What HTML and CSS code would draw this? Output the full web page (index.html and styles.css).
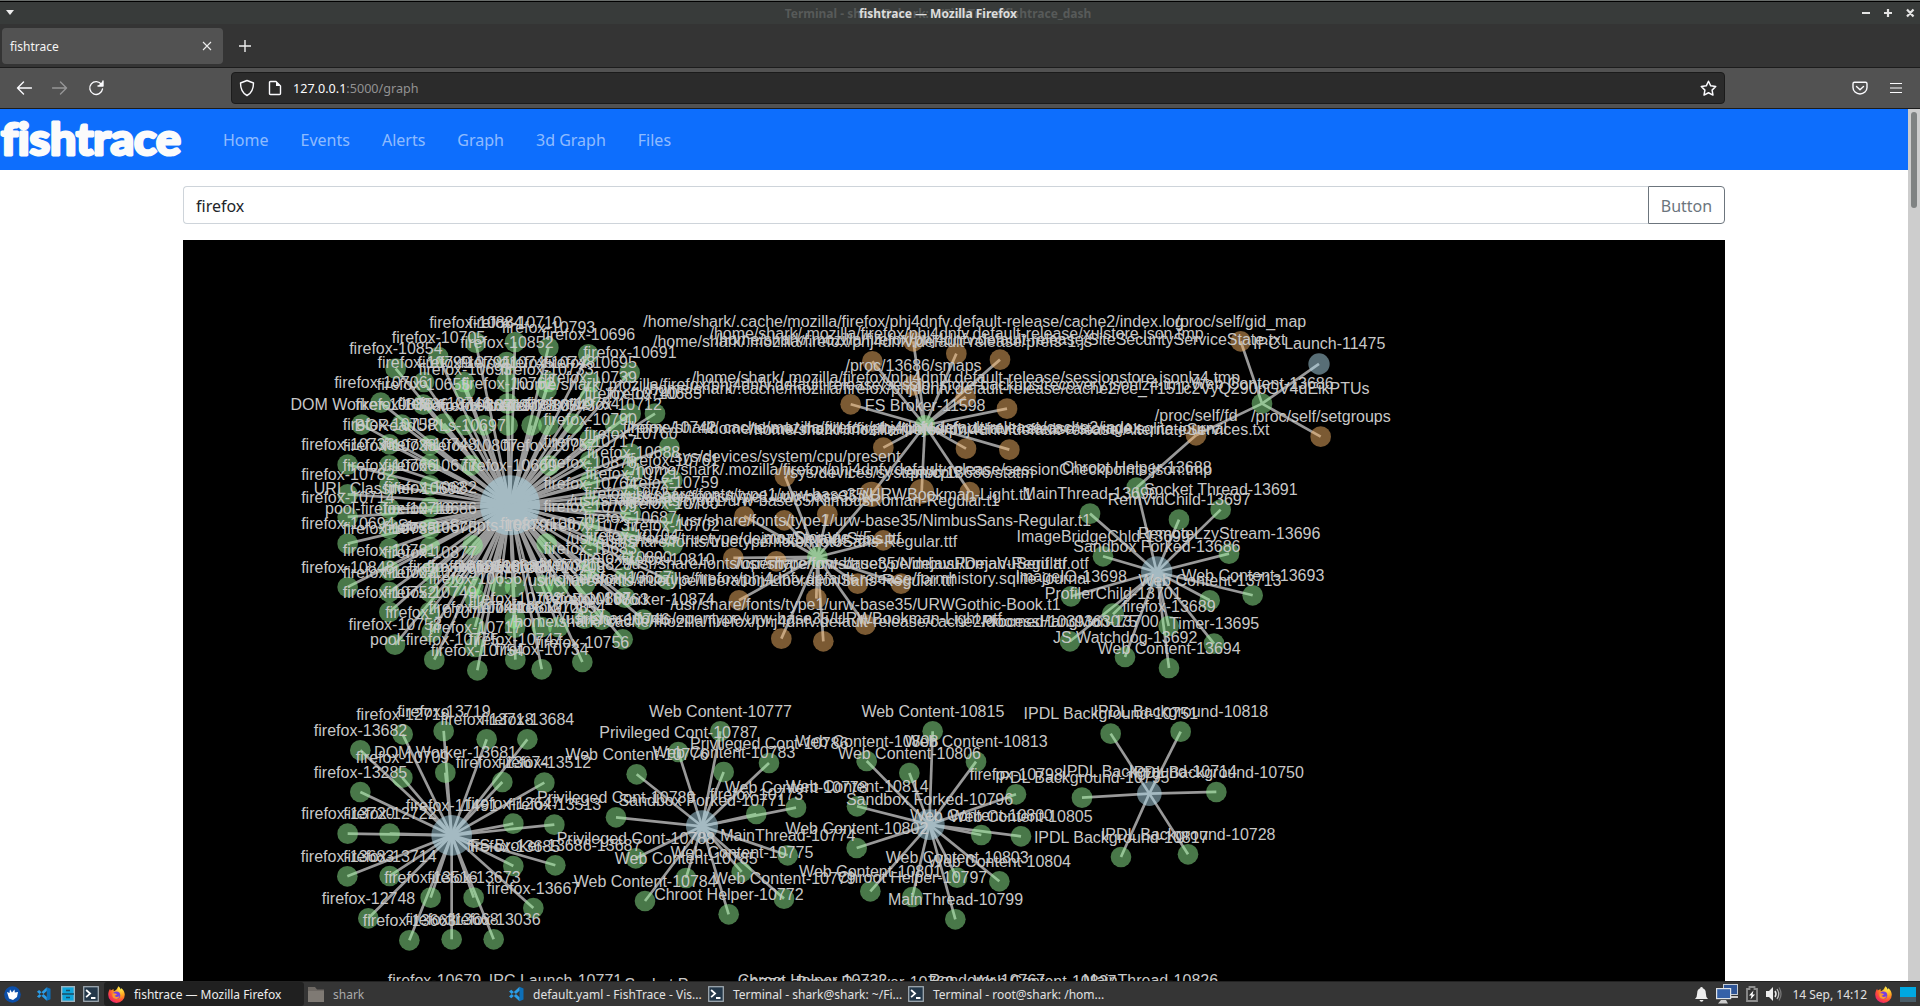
FILE: index.html
```html
<!DOCTYPE html>
<html lang="en">
<head>
<meta charset="utf-8">
<title>fishtrace</title>
<link rel="stylesheet" href="styles.css">
</head>
<body>
<svg class="defs" width="0" height="0" aria-hidden="true">
  <defs>
    <radialGradient id="flame" cx=".75" cy=".15" r="1"><stop offset="0" stop-color="#fff14f"/><stop offset=".4" stop-color="#ffa21f"/><stop offset=".7" stop-color="#ff4b3a"/><stop offset="1" stop-color="#e3177f"/></radialGradient>
    <symbol id="i-firefox" viewBox="0 0 16 16"><path fill="url(#flame)" d="M9.6.2c1.5.9 2.1 2 2.3 3.1.5-.4.6-.9.6-1.5 2 1.500 3.300 4 3.300 6.400A7.800 7.800 0 0 1 8 16 7.800 7.800 0 0 1 .2 8.200C.2 6 .9 4.200 2 2.700c.1.700.3 1.200.7 1.600C3.500 3.600 4.400 3 5.400 3c-.3.700-.2 1.300.1 1.900C7.500 4.500 8.900 2.300 9.600.2z"/><circle cx="8" cy="8.600" r="3.500" fill="#7a3fe0"/><path fill="#ff9a2b" d="M4.200 7c1.600-.6 3 0 4.200.8-.5 1.100-1.600 1-2.200 1.400.6 1.300 2.800 1.500 4.600.3-.4 2-2.200 3-4 2.600C4.700 11.700 3.600 9.500 4.200 7z"/></symbol>
    <symbol id="i-code" viewBox="0 0 16 16"><path fill="#0d6fb8" d="M11.500.8 15.500 2.500v11l-4 1.800z"/><path fill="#2a9de8" d="M11.500.8v4L3.300 12.300 1 10.600zM11.500 15.300v-4L3.300 3.800 1 5.500z"/></symbol>
    <symbol id="i-term" viewBox="0 0 18 18"><rect x=".8" y=".8" width="16.400" height="16.400" fill="#24384a" stroke="#a2adb5" stroke-width="1.400"/><path d="M3.500 4.500 8 8.500l-4.500 4M9 13.500h5" fill="none" stroke="#fff" stroke-width="2"/></symbol>
  </defs>
</svg>

<header class="titlebar">
  <i class="window-menu"></i>
  <div class="titles"><span class="ghost">Terminal - shark@shark: ~/FishTrace/fishtrace_dash</span><span class="title">fishtrace — Mozilla Firefox</span></div>
  <svg class="window-buttons" viewBox="0 0 60 22" width="60" height="22"><g stroke="#e4e4e4" stroke-width="2.200" fill="none"><path d="M4 11h8M26 11h8M30 7v8M49 7.500l6.500 7M55.500 7.500 49 14.500"/></g></svg>
</header>

<div class="tabs">
  <div class="tab"><span>fishtrace</span><svg width="10" height="10" viewBox="0 0 10 10"><path d="M1 1l8 8M9 1 1 9" stroke="#eee" stroke-width="1.100"/></svg></div>
  <svg class="new-tab" width="14" height="14" viewBox="0 0 14 14"><path d="M7 1v12M1 7h12" stroke="#eee" stroke-width="1.400"/></svg>
</div>

<div class="toolbar">
  <div class="history">
    <svg width="16" height="16" viewBox="0 0 16 16"><path d="M15.500 8H1.500M7.500 2l-6 6 6 6" class="ln"/></svg>
    <svg class="dim" width="16" height="16" viewBox="0 0 16 16"><path d="M.5 8h14M8.500 2l6 6-6 6" class="ln"/></svg>
    <svg width="16" height="16" viewBox="0 0 16 16"><path d="M13.500 4.500A6.400 6.400 0 1 0 14.500 9M15 1v5h-5" class="ln"/><path d="M15 1v5h-5z" fill="#fbfbfe"/></svg>
  </div>
  <div class="urlbar">
    <svg width="16" height="18" viewBox="0 0 16 18"><path d="M8 1.500 14.500 4c0 6-1.500 10-6.500 12.500C3 14 1.500 10 1.500 4z" class="ln"/></svg>
    <svg width="14" height="16" viewBox="0 0 14 16"><path d="M1.500 2.500q0-1 1-1h5.500l4.500 4.500v7.500q0 1-1 1h-9q-1 0-1-1z" class="ln"/><path d="M8 1.500 12.500 6H8z" fill="#fbfbfe"/></svg>
    <span class="url"><b>127.0.0.1</b>:5000/graph</span>
    <svg class="star" width="17" height="17" viewBox="0 0 16 16"><path d="M8 1.200l2.100 4.300 4.700.7-3.400 3.300.8 4.700L8 12l-4.200 2.200.8-4.700L1.200 6.200l4.700-.7z" class="ln"/></svg>
  </div>
  <svg class="pocket" width="16" height="16" viewBox="0 0 16 16"><path d="M2.500 2.300h11q1.500 0 1.500 1.500v3.700a7 6.500 0 0 1-14 0V3.800q0-1.500 1.500-1.500zM4.500 6.500 8 9.800l3.500-3.300" class="ln"/></svg>
  <svg class="menu" width="12" height="12" viewBox="0 0 12 12"><path d="M0 1.500h12M0 6h12M0 10.500h12" stroke="#fbfbfe" stroke-width="1.100"/></svg>
</div>

<div class="viewport">
  <div class="page">
    <nav class="navbar">
      <svg class="brand" width="184" height="61" viewBox="0 0 184 61"><text x="1" y="45.500" textLength="180" lengthAdjust="spacingAndGlyphs">fishtrace</text></svg>
      <a>Home</a><a>Events</a><a>Alerts</a><a>Graph</a><a>3d Graph</a><a>Files</a>
    </nav>
    <main class="container">
      <div class="search"><div class="field">firefox</div><div class="btn">Button</div></div>
      <svg id="graph" class="graph" width="1542" height="741" viewBox="183 240 1542 741"></svg>
    </main>
  </div>
  <div class="scrollbar"><i></i></div>
</div>

<footer class="taskbar">
  <div class="launchers">
    <svg width="17" height="17" viewBox="0 0 17 17"><circle cx="8.500" cy="8.500" r="8.300" fill="#0b4ea8"/><path fill="#fff" d="M3 6l2.500 1L6 3.500l2 3 2.500-3 .3 3L14 6l-1 5-4 3-4-1.500z"/></svg>
    <svg width="15" height="16"><use href="#i-code"/></svg>
    <svg width="14" height="16" viewBox="0 0 14 16"><rect x=".7" y=".7" width="12.600" height="14.600" fill="#0fa5dc" stroke="#9db4c0" stroke-width="1.400"/><path d="M1 8h12M5 4.500h4M5 11.500h4" stroke="#1b4d66" stroke-width="1.500"/></svg>
    <svg width="16" height="16"><use href="#i-term"/></svg>
  </div>
  <div class="task active"><svg width="17" height="17"><use href="#i-firefox"/></svg><span>fishtrace — Mozilla Firefox</span></div>
  <div class="task idle"><svg width="16" height="15" viewBox="0 0 16 15"><path fill="#6e6964" d="M0 0h7l2 2.500h7V15H0z"/><path fill="#8b857f" d="M0 4h16v11H0z" opacity=".6"/></svg><span>shark</span></div>
  <div class="task"><svg width="16" height="16"><use href="#i-code"/></svg><span>default.yaml - FishTrace - Vis...</span></div>
  <div class="task"><svg width="16" height="16"><use href="#i-term"/></svg><span>Terminal - shark@shark: ~/Fi...</span></div>
  <div class="task"><svg width="16" height="16"><use href="#i-term"/></svg><span>Terminal - root@shark: /hom...</span></div>
  <div class="tray">
    <svg width="13" height="15" viewBox="0 0 13 15"><path fill="#eee" d="M6.500 0q1.300 0 1.300 1.300 3 1 3 4.700 0 4 2.200 6H0q2.200-2 2.200-6 0-3.700 3-4.700Q5.200 0 6.500 0zM4.500 13h4q-.3 1.800-2 1.800t-2-1.800z"/></svg>
    <svg width="22" height="20" viewBox="0 0 22 20"><rect x="7.500" y=".5" width="14" height="10" fill="#2f5596" stroke="#c4cbd4"/><path d="M15 13h7" stroke="#ccc" stroke-width="2"/><rect x=".6" y="4.600" width="14" height="10" fill="#3561a8" stroke="#dfe3e8" stroke-width="1.200"/><path d="M5 16h5l2 3.500H2z" fill="#ccc"/></svg>
    <svg width="12" height="16" viewBox="0 0 12 16"><path d="M1 3h2.500V1h5v2H11v12H1z" fill="none" stroke="#8f8f8f" stroke-width="1.800"/><path fill="#fff" d="M7.500 4.500 3 9.500h2.500l-1 4L9 8.500H6.500z"/></svg>
    <svg width="16" height="14" viewBox="0 0 16 14"><path fill="#eee" d="M0 4h3l4-4v14L3 10H0z"/><path d="M9 4q2 3 0 6" stroke="#eee" fill="none" stroke-width="1.500"/><path d="M11 2q3.500 5 0 10" stroke="#bbb" fill="none" stroke-width="1.300"/><path d="M13 .5q4 6.500 0 13" stroke="#777" fill="none" stroke-width="1.300"/></svg>
    <span>14 Sep, 14:12</span>
    <svg width="17" height="17"><use href="#i-firefox"/></svg>
    <svg width="16" height="15" viewBox="0 0 16 15"><path fill="#00a8e1" d="M0 0h16v10H0z"/><path fill="#4a5d68" d="M0 10h16v5H0z"/></svg>
  </div>
</footer>
<script src="graph.js"></script>
</body>
</html>
```
FILE: styles.css
```css
* { box-sizing: border-box; }
body { margin: 0; width: 1920px; height: 1006px; overflow: hidden; display: flex; flex-direction: column; font-family: "Noto Sans", sans-serif; background: #fff; }
svg { display: block; flex: none; }
.defs { position: absolute; }
.ln { fill: none; stroke: #fbfbfe; stroke-width: 1.4; stroke-linecap: round; stroke-linejoin: round; }

.titlebar { height: 24px; flex: none; display: flex; align-items: center; justify-content: space-between; background: #383b3a; border-top: 1px solid #686c6a; box-shadow: inset 0 1px #000; }
.window-menu { margin-left: 6px; width: 0; border: 4px solid transparent; border-top: 5px solid #eee; border-bottom: 0; }
.titles { display: grid; place-items: center; padding: 2px 0 0 4px; font-size: 12px; font-weight: 700; line-height: 20px; }
.titles span { grid-area: 1 / 1; white-space: nowrap; }
.ghost { color: #575a59; }
.title { color: #dcdcdc; }
.window-buttons { margin-right: 2px; }

.tabs { height: 44px; flex: none; display: flex; align-items: center; padding-left: 2px; background: #343434; border-bottom: 1px solid #1c1c1c; }
.tab { width: 221px; height: 36px; margin-top: 1px; padding: 0 11px 0 8px; display: flex; align-items: center; justify-content: space-between; background: #525252; border-radius: 4px; color: #f5f5f5; font-size: 12px; }
.new-tab { margin-left: 15px; }

.toolbar { height: 41px; flex: none; display: flex; align-items: center; background: #525252; border-bottom: 1px solid #1c1c1c; }
.history { width: 231px; padding-left: 16px; display: flex; gap: 20px; }
.dim { opacity: .4; }
.urlbar { width: 1494px; height: 32px; display: flex; align-items: center; padding: 0 7px 0 7px; background: #2b2b2b; border: 1px solid #1b1b1b; border-radius: 4px; }
.urlbar svg + svg { margin-left: 13px; }
.url { margin-left: 11px; flex: 1; font-size: 12.6px; color: #929292; }
.url b { font-weight: 400; color: #fbfbfe; }
.pocket { margin-left: 127px; }
.menu { margin-left: 22px; }

.viewport { flex: 1; min-height: 0; display: flex; }
.page { width: 1908px; overflow: hidden; }
.navbar { height: 61px; display: flex; align-items: center; gap: 32px; background: #0d6efd; color: rgba(255,255,255,.55); font-size: 16px; }
.navbar a { line-height: 24px; }
.brand { margin-right: 7px; }
.brand text { font: 700 43px Lato, sans-serif; fill: #fbfbfb; stroke: #fbfbfb; stroke-width: 3; stroke-linejoin: round; font-variant-ligatures: none; }
.container { width: 1542px; margin-left: 183px; padding-top: 16px; }
.search { display: flex; height: 38px; margin-bottom: 16px; font-size: 16px; line-height: 38px; }
.field { flex: 1; padding-left: 12px; border: 1px solid #ced4da; border-right: 0; border-radius: 4px 0 0 4px; color: #212529; }
.btn { width: 77px; text-align: center; border: 1px solid #6c757d; border-radius: 0 4px 4px 0; color: #6c757d; }
.graph { background: #000; }
.graph line { stroke: #999; stroke-width: 2.7; }
.graph circle { fill-opacity: .5; }
.graph text { font: 16px "Liberation Sans", sans-serif; fill: #c8c8c8; text-anchor: middle; }
.green { fill: #92f092; }
.blue { fill: #b0dcec; }
.brown { fill: #f6b466; }
.scrollbar { width: 12px; padding: 3px; background: #cdcdcd; }
.scrollbar i { display: block; height: 96px; border-radius: 3px; background: #7f8282; }

.taskbar { height: 25px; flex: none; display: flex; align-items: center; background: #353535; border-top: 1px solid #222; font-size: 12px; color: #e2e2e2; }
.launchers { width: 104px; padding-left: 4px; display: flex; align-items: center; gap: 8px; }
.launchers svg:first-child { margin-right: 7px; }
.launchers svg:nth-child(3) { margin-left: 2px; }
.task { width: 200px; height: 24px; padding-left: 4px; display: flex; align-items: center; gap: 9px; white-space: nowrap; }
.active { background: #202020; border-radius: 3px; color: #eee; }
.active span { letter-spacing: -.03px; }
.idle { color: #aaa; }
.tray { margin-left: auto; padding-right: 4px; display: flex; align-items: center; gap: 8px; }
.tray span { margin: 0 0 0 2px; }
```
FILE: graph.js
```js
// Each cluster has an origin, a hub and the nodes tied to it: [x, y, label, colour, radius].
// Node positions are thirds of a pixel from the origin.
const ff = (list) => list.map(([x, y, n]) => [x, y, 'firefox-' + n]);
const mz = '/home/shark/.mozilla/firefox/phj4dnfv.default-release/';
const cc = '/home/shark/.cache/mozilla/firefox/phj4dnfv.default-release/cache2/';
const fonts = '/usr/share/fonts/';

const clusters = [
  { at: [280, 290], hub: [690, 645, 'firefox-10669', 'blue', 90], color: 'green', nodes: [
    ...ff([
      [587,157,10884],[705,155,10710],[805,172,10793],[925,192,10696],[475,200,10705],[347,235,10854],[1049,247,10691],
      [432,275,10799],[552,275,10791],[680,215,10852],[680,275,10745],[805,275,10748],[930,275,10695],[555,298,10693],
      [800,298,10733],[302,337,10706],[430,343,10655],[683,340,10762],[930,320,10739],[1125,370,10685],[1052,370,10740],
      [1005,402,10712],[365,403,10836],[492,400,10746],[555,404,10883],[612,405,10719],[683,405,10728],[755,405,10805],
      [805,405,10743],[878,400,10784],[930,448,10790],[1168,470,10742],[1052,490,10760],[328,462,10758],[573,525,10807],
      [808,525,10757],[203,523,10736],[328,525,10738],[450,522,10748],[930,512,10717],[1060,545,10688],[930,575,10878],
      [1177,570,10761],[1055,610,10721],[1175,635,10759],[930,640,10764],[203,612,10782],[328,585,10766],[450,585,10677],
      [450,650,10682],[203,680,10714],[450,715,10686],[203,760,10694],[328,775,10735],[450,770,10675],[1052,670,10727],
      [1175,698,10700],[930,708,10709],[1050,740,10687],[1178,765,10702],[935,765,10737],[328,840,10781],[450,845,10877],
      [203,890,10848],[328,905,10703],[450,905,10729],[328,965,10752],[450,965,10749],[345,1063,10753],[455,1025,10707],
      [585,1010,10744],[585,1070,10717],[592,1140,10754],[706,1108,10747],[785,1137,10734],[907,1115,10756],[1028,1047,10746],
      [965,988,10863],[913,985,10887],[1035,922,10657],[1163,868,10810],[1035,860,10890],[1055,795,10704],[800,760,10870],
      [835,1010,10854],[785,1010,10720],[705,1012,10812],[705,985,10792],[585,925,10656],[525,888,10681],[580,888,10698],
      [660,888,10683],[705,890,10867],[790,885,10732],[835,890,10708],[915,882,10828],[930,835,10683]]),
    [245,403,'DOM Worker-10885'],[450,465,'BGReadURLs-10697'],[328,655,'URL Classifier-10692'],[328,715,'pool-firefox-10716'],
    [578,765,'StreamScripts-10879'],[463,1108,'pool-firefox-10775'],[1090,988,'DOM Worker-10874']] },
  { at: [620, 290], hub: [915, 405, 'FS Broker-11598', 'green', 31], color: 'brown', nodes: [
    [880,153,cc+'index.log'],[1009,190,mz+'xulstore.json.tmp'],[757,213,mz+'prefs-1.js'],[1140,208,mz+'SiteSecurityServiceState.txt'],
    [880,285,'/proc/13686/smaps'],[1037,320,mz+'sessionstore.jsonlz4.tmp'],[692,342,mz+'sessionstore-backups/recovery.jsonlz4.tmp'],
    [1161,355,cc+'ce_T151c2VyQ290bGV4dEikPTUs'],[790,472,cc+'index'],[1038,475,mz+'storage.sqlite-journal'],
    [1168,478,mz+'AlternateServices.txt'],[755,612,'/sys/devices/system/cpu','brown',38],
    [905,603,mz+'sessionCheckpoints.json.tmp','brown',37],[1049,605,'/proc/13686/statm']] },
  { at: [620, 290], hub: [592, 800, 'mozStorage #5', 'green', 31], color: 'brown', links: [[755, 612]], nodes: [
    [495,558,'/sys/devices/system/cpu/present'],[373,678,fonts+'type1/urw-base35/N'],[493,690,fonts+'type1/urw-base35/NimbusRoman-Regular.t1'],
    [622,672,fonts+'type1/urw-base35/URWBookman-Light.t1'],[790,750,fonts+'type1/urw-base35/NimbusSans-Regular.t1'],
    [340,803,fonts+'truetype/dejavu/DejaVuSans.ttf'],[469,813,fonts+'truetype/noto/NotoSans-Regular.ttf'],
    [713,880,fonts+'opentype/urw-base35/NimbusRoman-Regular.otf'],[843,880,fonts+'truetype/dejavu/DejaVuSerif.ttf'],
    [357,930,fonts+'truetype/liberation/LiberationSans-Regular.ttf'],[589,925,mz+'formhistory.sqlite-journal'],
    [736,1003,fonts+'type1/urw-base35/URWGothic-Book.t1'],[484,1045,fonts+'opentype/urw-base35/URWBookman-Light.otf'],
    [610,1053,cc+'doomed/1039363075']] },
  { at: [1000, 290], hub: [786, 340, 'Web Content-13686', 'green', 31], color: 'brown', nodes: [
    [722,153,'/proc/self/gid_map'],[957,221,'IPC Launch-11475','blue',32],[962,439,'/proc/self/setgroups'],[588,435,'/proc/self/fd']] },
  { at: [1000, 290], hub: [470, 845, 'Sandbox Forked-13686', 'blue', 47], color: 'green', extra: [[588, 435, 410, 592]], nodes: [
    [410,592,'Chroot Helper-13688'],[270,670,'MainThread-13690'],[662,658,'Socket Thread-13691'],[537,688,'RemVidChild-13697'],
    [309,798,'ImageBridgeChld-13699'],[687,790,'RemoteLzyStream-13696'],[213,918,'ImageIO-13698'],[758,915,'Web Content-13693'],
    [629,930,'Web Content-13713'],[339,972,'ProfilerChild-13701','green',33],[506,1007,'firefox-13689'],[210,1053,'ProcessHangMon-13700'],
    [375,1100,'JS Watchdog-13692'],[642,1060,'Timer-13695'],[507,1133,'Web Content-13694']] },
  { at: [290, 690], hub: [485, 435, 'firefox-11491', 'blue', 61], color: 'green', nodes: [
    ...ff([[211,180,13682],[338,132,12719],[461,122,13719],[590,147,13718],[712,147,13684],[337,262,10709],[637,275,13674],
      [763,277,13512],[211,305,13285],[670,400,12647],[793,403,13513],[173,430,13720],[299,430,12722],[670,527,13685],
      [172,558,13683],[299,557,13714],[422,622,13516],[551,622,13673],[730,653,13667],[235,684,12748],[358,750,13663],
      [485,747,13668],[611,747,13036]]),
    [466,247,'DOM Worker-13681'],[796,525,'FS Broker-13686-13687']] },
  { at: [620, 690], hub: [246, 408, 'Sandbox Forked-10771', 'blue', 48], color: 'green', nodes: [
    [301,123,'Web Content-10777'],[175,185,'Privileged Cont-10787'],[50,252,'Web Content-10776'],[447,218,'Privileged Cont-10786'],
    [311,245,'Web Content-10783'],[528,352,'Web Content-10778'],[409,371,'firefox-10773'],[-12,381,'Privileged Cont-10789'],
    [47,504,'Privileged Cont-10788'],[503,495,'MainThread-10774'],[365,545,'Web Content-10775'],[198,563,'Web Content-10785'],
    [75,632,'Web Content-10784'],[492,625,'Web Content-10779'],[326,672,'Chroot Helper-10772']] },
  { at: [620, 690], hub: [928, 403, 'Sandbox Forked-10796', 'blue', 46], color: 'green', nodes: [
    [938,123,'Web Content-10815'],[740,212,'Web Content-10808'],[1068,214,'Web Content-10813'],[868,248,'Web Content-10806'],
    [1188,312,'firefox-10798'],[711,348,'Web Content-10814'],[1084,434,'Web Content-10800'],[1203,438,'Web Content-10805'],
    [710,473,'Web Content-10802'],[1011,562,'Web Content-10803'],[1138,573,'Web Content-10804'],[751,603,'Web Content-10801'],
    [877,620,'Chroot Helper-10797'],[1006,687,'MainThread-10799']] },
  { at: [970, 690], hub: [538, 310, 'IPDL Background-10714', 'blue', 37], color: 'green', nodes: [
    [422,130,'IPDL Background-10751'],[632,124,'IPDL Background-10818'],[336,322,'IPDL Background-10795'],
    [739,305,'IPDL Background-10750'],[453,500,'IPDL Background-10817'],[654,492,'IPDL Background-10728']] },
];

// Labels of the next row, whose nodes are below the fold: [x, baseline, text].
const below = [[434.500,985.500,'firefox-10679'],[555.500,985.500,'IPC Launch-10771'],[705,989.500,'Socket Process-10770'],[812.500,985.500,'Chroot Helper-10732'],
  [875,987.500,'Proxy Resolver-10769'],[987,985.500,'Renderer-10767'],[1045,986.500,'Web Content-10827'],[1150.500,985.500,'MainThread-10826']];

const layers = { line: '', circle: '', text: '' };
const line = (a, b, c, d) => { layers.line += `<line x1="${a}" y1="${b}" x2="${c}" y2="${d}"/>`; };
for (const { at: [ox, oy], hub, color, nodes, links = [], extra = [] } of clusters) {
  const px = (x) => ox + x / 3, py = (y) => oy + y / 3 + 0.3;
  for (const [x, y] of [...nodes, ...links]) line(px(hub[0]), py(hub[1]), px(x), py(y));
  for (const [a, b, c, d] of extra) line(px(a), py(b), px(c), py(d));
  for (const [x, y, label, fill = color, r = 31] of [...nodes, hub]) {
    layers.circle += `<circle class="${fill}" cx="${px(x)}" cy="${py(y)}" r="${r / 3}"/>`;
    layers.text += `<text x="${px(x) + 0.2}" y="${py(y - r) - 3.9}">${label}</text>`;
  }
}
for (const [x, y, label] of below) layers.text += `<text x="${x}" y="${y}">${label}</text>`;
document.getElementById('graph').innerHTML = layers.line + layers.circle + layers.text;
```
